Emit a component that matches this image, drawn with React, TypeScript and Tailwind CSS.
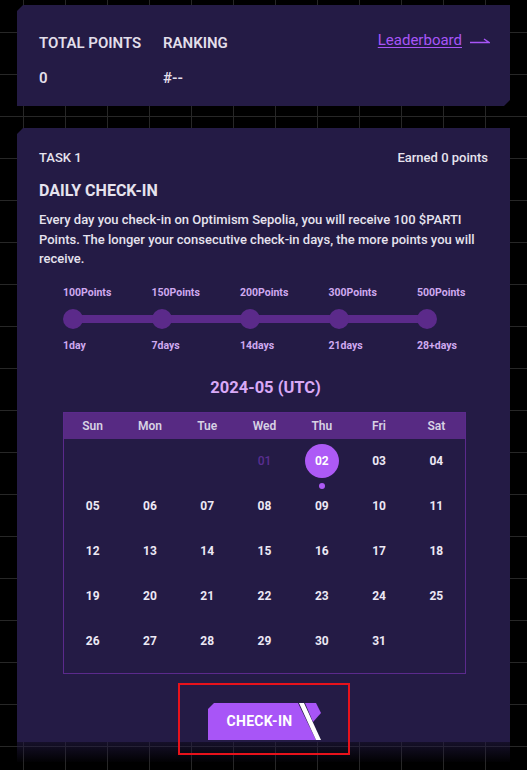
import React from 'react';

const font = { fontFamily: 'Roboto, "Noto Sans", sans-serif' };

const milestones = [
  { points: '100Points', days: '1day' },
  { points: '150Points', days: '7days' },
  { points: '200Points', days: '14days' },
  { points: '300Points', days: '21days' },
  { points: '500Points', days: '28+days' },
];

const weekDays = ['Sun', 'Mon', 'Tue', 'Wed', 'Thu', 'Fri', 'Sat'];

// May 2024 starts on a Wednesday
const cells: (number | null)[] = [null, null, null, ...Array.from({ length: 31 }, (_, i) => i + 1)];
while (cells.length % 7 !== 0) cells.push(null);

const pad = (n: number) => (n < 10 ? '0' + n : String(n));

const CheckInButton: React.FC = () => (
  <button className="relative w-[114px] h-[37px]">
    <svg width="114" height="37" viewBox="0 0 114 37" className="absolute inset-0">
      <polygon points="0,6 6,0 90,0 108,37 0,37" fill="#a855f7" />
      <polygon points="91,0 96,0 113,37 108,37" fill="#ffffff" />
      <polygon points="97,0 108,0 113,10 105,19" fill="#a855f7" />
    </svg>
    <span className="absolute left-0 top-0 w-[104px] h-[37px] flex items-center justify-center text-[14px] font-bold text-white tracking-[0.3px]">
      CHECK-IN
    </span>
  </button>
);

const Calendar: React.FC = () => {
  const rows: (number | null)[][] = [];
  for (let i = 0; i < cells.length; i += 7) rows.push(cells.slice(i, i + 7));

  return (
    <div className="ml-[24px] w-[403px] border border-[#5b2a8c] pb-[9px]">
      <div className="grid grid-cols-7 h-[26px] bg-[#572a83] items-center">
        {weekDays.map((d) => (
          <span key={d} className="text-center text-[12px] font-semibold text-[#d8d2e4]">
            {d}
          </span>
        ))}
      </div>
      {rows.map((row, ri) => (
        <div key={ri} className="grid grid-cols-7 h-[45px] items-center">
          {row.map((day, ci) => {
            if (day === null) return <span key={ci} />;
            if (day === 1)
              return (
                <span key={ci} className="text-center text-[12px] font-medium text-[#5a2e91]">
                  01
                </span>
              );
            if (day === 2)
              return (
                <div key={ci} className="relative flex justify-center">
                  <span className="w-[34px] h-[34px] rounded-full bg-[#ad5af6] flex items-center justify-center text-[12px] font-bold text-white">
                    02
                  </span>
                  <span className="absolute left-1/2 -translate-x-1/2 top-[39px] w-[6px] h-[6px] rounded-full bg-[#ad5af6]" />
                </div>
              );
            return (
              <span key={ci} className="text-center text-[12px] font-bold text-[#ece8f4]">
                {pad(day)}
              </span>
            );
          })}
        </div>
      ))}
    </div>
  );
};

export default function App() {
  return (
    <div
      className="relative w-[527px] h-[770px] overflow-hidden bg-black bg-[linear-gradient(to_right,#272727_1px,transparent_1px),linear-gradient(to_bottom,#272727_1px,transparent_1px)] bg-[size:42px_42px] bg-[position:23px_32px]"
      style={font}
    >
      <div className="flex flex-col px-[17px] pt-[5px]">
        {/* points summary */}
        <div className="h-[101px] bg-[#241b45] px-[22px] pt-[29px] flex justify-between [clip-path:polygon(6px_0,100%_0,100%_calc(100%-6px),calc(100%-6px)_100%,0_100%,0_6px)]">
          <div className="flex">
            <div className="w-[124px] flex flex-col gap-[17px]">
              <span className="text-[15px] leading-[18px] font-semibold text-[#e2dfea]">TOTAL POINTS</span>
              <span className="text-[15px] leading-[18px] font-semibold text-[#e2dfea]">0</span>
            </div>
            <div className="flex flex-col gap-[17px]">
              <span className="text-[15px] leading-[18px] font-semibold text-[#e2dfea]">RANKING</span>
              <span className="text-[15px] leading-[18px] font-semibold text-[#e2dfea]">#--</span>
            </div>
          </div>
          <div className="flex items-start gap-[8px] -mt-[3px] -mr-[2px]">
            <span className="text-[15px] leading-[18px] text-[#a855f7] underline underline-offset-2">Leaderboard</span>
            <svg width="20" height="8" viewBox="0 0 20 8" className="mt-[5px]">
              <path d="M0 6.5 H19 L14 3" stroke="#a855f7" strokeWidth="1.4" fill="none" />
            </svg>
          </div>
        </div>

        {/* task card */}
        <div className="relative mt-[22px]">
          <div className="absolute inset-x-0 top-0 h-[614px] bg-[#241b45] [clip-path:polygon(6px_0,100%_0,100%_100%,0_100%,0_6px)]" />
          <div className="absolute inset-x-0 top-[614px] h-[20px] bg-linear-to-b from-[#241b45]/60 to-[#241b45]/5" />
          <div className="relative px-[22px] pt-[21px]">
            <div className="flex justify-between items-center h-[18px]">
              <span className="text-[13px] font-medium text-[#e6e3ee]">TASK 1</span>
              <span className="text-[13px] font-medium text-[#e6e3ee]">Earned 0 points</span>
            </div>
            <h2 className="mt-[14px] text-[16px] leading-[20px] font-bold text-[#e6e3ee]">DAILY CHECK-IN</h2>
            <p className="mt-[9px] text-[13px] leading-[19.5px] font-medium text-[#e6e3ee] whitespace-nowrap">
              Every day you check-in on Optimism Sepolia, you will receive 100 $PARTI
              <br />
              Points. The longer your consecutive check-in days, the more points you will
              <br />
              receive.
            </p>

            {/* streak track */}
            <div className="mt-[17px] ml-[24px] relative">
              <div className="absolute left-[10px] top-[29px] w-[354px] h-[8px] bg-[#5b2a8a]" />
              <div className="relative flex gap-[39.5px]">
                {milestones.map((m) => (
                  <div key={m.points} className="w-[49px] flex flex-col">
                    <span className="text-[10.5px] leading-[14px] font-bold text-[#cfa9ef] whitespace-nowrap">{m.points}</span>
                    <span className="mt-[9px] w-[20px] h-[20px] rounded-full bg-[#5b2a8a]" />
                    <span className="mt-[10px] text-[10.5px] leading-[14px] font-bold text-[#cfa9ef] whitespace-nowrap">{m.days}</span>
                  </div>
                ))}
              </div>
            </div>

            <div className="mt-[25px] text-center text-[16.5px] leading-[20px] font-bold text-[#d9a9f6] pl-[4px]">
              2024-05 (UTC)
            </div>

            <div className="mt-[14px]">
              <Calendar />
            </div>

            <div className="mt-[9px] flex justify-center">
              <div className="w-[172px] h-[72px] border-2 border-[#e8121b] pl-[28px] pt-[18px]">
                <CheckInButton />
              </div>
            </div>
          </div>
        </div>
      </div>
    </div>
  );
}
